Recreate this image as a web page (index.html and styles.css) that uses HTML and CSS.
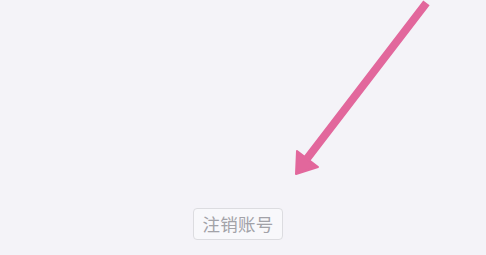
FILE: index.html
```html
<!DOCTYPE html>
<html lang="zh">
<head>
<meta charset="utf-8">
<link rel="stylesheet" href="styles.css">
</head>
<body>
<div class="page">
  <div class="actions">
    <button class="cancel-btn">注销账号</button>
  </div>
  <svg class="arrow" width="486" height="255" viewBox="0 0 486 255">
    <line x1="424" y1="6" x2="306" y2="160" stroke="#e2679c" stroke-width="8" stroke-linecap="square"/>
    <polygon points="296,174 297,151 318,167" fill="#e2679c" stroke="#e2679c" stroke-width="2" stroke-linejoin="round"/>
  </svg>
</div>
</body>
</html>
```
FILE: styles.css
```css
html, body {
  margin: 0;
  padding: 0;
  background: #f4f3f8;
}
.page {
  position: relative;
  width: 486px;
  height: 255px;
  overflow: hidden;
}
.actions {
  display: flex;
  padding: 208px 0 0 193px;
}
.cancel-btn {
  width: 90px;
  height: 32px;
  box-sizing: border-box;
  border: 1px solid #dcdce0;
  border-radius: 4px;
  background: #f8f8fb;
  color: #a2a2a8;
  font-family: "Noto Sans CJK SC", sans-serif;
  font-size: 17.5px;
  line-height: 30px;
  padding: 0;
  letter-spacing: 0.3px;
}
.arrow {
  position: absolute;
  left: 0;
  top: 0;
}
```
